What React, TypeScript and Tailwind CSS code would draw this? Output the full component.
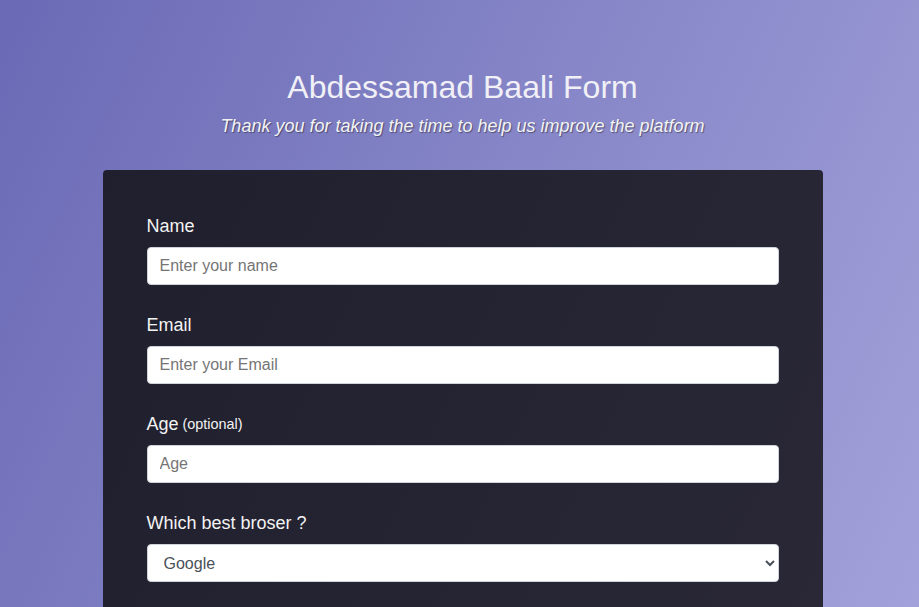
import React from "react";

export default function App() {
  const font = { fontFamily: '"Liberation Sans", Arial, sans-serif' };
  return (
    <div
      className="h-screen w-full overflow-hidden bg-[linear-gradient(115deg,#6a69b5_0%,#8686c8_50%,#a3a1da_100%)] text-[#f3f3f3] leading-[1.4]"
      style={font}
    >
      <div className="w-full pt-[68px] pl-[16px] pr-[10px]">
        <header className="mb-[30px] text-center">
          <h1 className="text-[32px] leading-[1.2] font-normal text-[#f0f0f6] mb-2">
            Abdessamad Baali Form
          </h1>
          <p className="text-[18px] italic font-normal [text-shadow:1px_1px_1px_rgba(0,0,0,0.4)]">
            Thank you for taking the time to help us improve the platform
          </p>
        </header>
        <form className="mx-auto w-[720px] rounded-[4px] bg-[linear-gradient(115deg,#201f2d_0%,#252433_50%,#2a2837_100%)] px-10 pt-10 pb-24">
          <div className="mb-5 p-1">
            <label htmlFor="name" className="mb-2 flex items-center text-[18px]">
              Name
            </label>
            <input
              id="name"
              type="text"
              placeholder="Enter your name"
              className="block h-[38px] w-full rounded-[4px] border border-[#ced4da] bg-white px-3 py-[6px] text-[16px] text-[#495057] placeholder:text-[#757575] outline-none"
            />
          </div>
          <div className="mb-5 p-1">
            <label htmlFor="email" className="mb-2 flex items-center text-[18px]">
              Email
            </label>
            <input
              id="email"
              type="email"
              placeholder="Enter your Email"
              className="block h-[38px] w-full rounded-[4px] border border-[#ced4da] bg-white px-3 py-[6px] text-[16px] text-[#495057] placeholder:text-[#757575] outline-none"
            />
          </div>
          <div className="mb-5 p-1">
            <label htmlFor="number" className="mb-2 flex items-center text-[18px]">
              Age<span className="ml-1 text-[14.4px]">(optional)</span>
            </label>
            <input
              id="number"
              type="number"
              placeholder="Age"
              className="block h-[38px] w-full rounded-[4px] border border-[#ced4da] bg-white px-3 py-[6px] text-[16px] text-[#495057] placeholder:text-[#757575] outline-none"
            />
          </div>
          <div className="mb-5 p-1">
            <label htmlFor="dropdown" className="mb-2 flex items-center text-[18px]">
              Which best broser ?
            </label>
            <select
              id="dropdown"
              defaultValue="google"
              className="block h-[38px] w-full rounded-[4px] border border-[#ced4da] bg-white px-3 text-[16px] text-[#495057] outline-none"
            >
              <option value="google">Google</option>
              <option value="firefox">Firefox</option>
              <option value="opera">Opera</option>
            </select>
          </div>
        </form>
      </div>
    </div>
  );
}
